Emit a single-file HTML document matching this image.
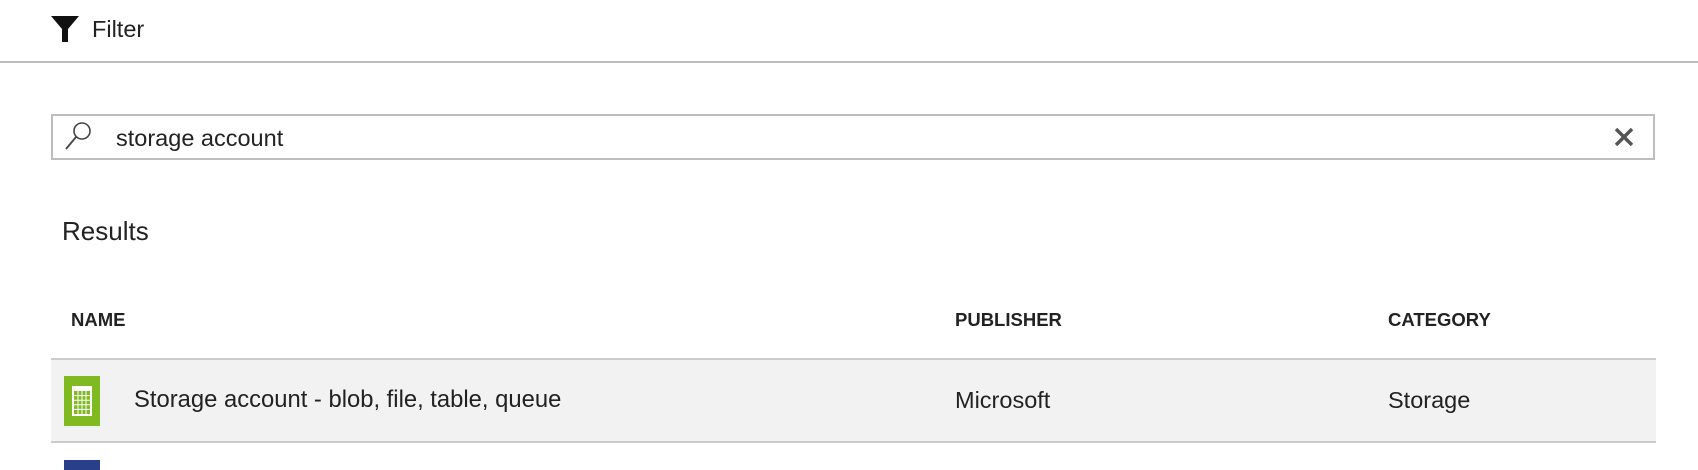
<!DOCTYPE html>
<html><head><meta charset="utf-8"><style>
body{margin:0;width:1698px;height:466px;background:#fff;font-family:"Liberation Sans",sans-serif;color:#222;position:relative;overflow:hidden}
.a{position:absolute;white-space:nowrap}
.h{font-weight:bold;font-size:18.5px;line-height:22px}
.t{font-size:23.5px;line-height:28px}
</style></head><body>
<svg class="a" style="left:51px;top:15px" width="28" height="28" viewBox="0 0 28 28"><path d="M0 1H28L17 14V27H11V14Z" fill="#111"/></svg>
<div class="a t" style="left:92px;top:15px">Filter</div>
<div class="a" style="left:0;top:61px;width:1698px;height:2px;background:#bcbcbc"></div>
<div class="a" style="left:51px;top:114px;width:1600px;height:42px;border:2px solid #bdbdbd"></div>
<svg class="a" style="left:63px;top:120px" width="30" height="32" viewBox="0 0 30 32"><circle cx="19" cy="11" r="8" fill="none" stroke="#444" stroke-width="1.6"/><path d="M13 17L3 29" stroke="#444" stroke-width="1.8"/></svg>
<div class="a t" style="left:116px;top:124px">storage account</div>
<svg class="a" style="left:1614px;top:128px" width="20" height="18" viewBox="0 0 20 18"><path d="M2 1L18 17M18 1L2 17" stroke="#555" stroke-width="3.5"/></svg>
<div class="a" style="left:62px;top:215px;font-size:26px;line-height:32px">Results</div>
<div class="a h" style="left:71px;top:309px">NAME</div>
<div class="a h" style="left:955px;top:309px">PUBLISHER</div>
<div class="a h" style="left:1388px;top:309px">CATEGORY</div>
<div class="a" style="left:51px;top:358px;width:1605px;height:85px;background:#f2f2f2;border-top:2px solid #ccc;border-bottom:2px solid #ccc;box-sizing:border-box"></div>
<svg class="a" style="left:64px;top:376px" width="36" height="50" viewBox="0 0 36 50"><rect width="36" height="50" fill="#7fba20"/><rect x="8" y="10" width="20" height="30" fill="#fff"/><rect x="10" y="15" width="16" height="23" fill="#7fba20"/><g stroke="#fff" stroke-width="1"><path d="M14 15V38M18 15V38M22 15V38M10 19.6H26M10 24.2H26M10 28.8H26M10 33.4H26"/></g></svg>
<div class="a t" style="left:134px;top:386px;font-size:23.8px">Storage account - blob, file, table, queue</div>
<div class="a t" style="left:955px;top:386px">Microsoft</div>
<div class="a t" style="left:1388px;top:386px">Storage</div>
<div class="a" style="left:64px;top:460px;width:36px;height:10px;background:#2a3f8a"></div>
</body></html>
